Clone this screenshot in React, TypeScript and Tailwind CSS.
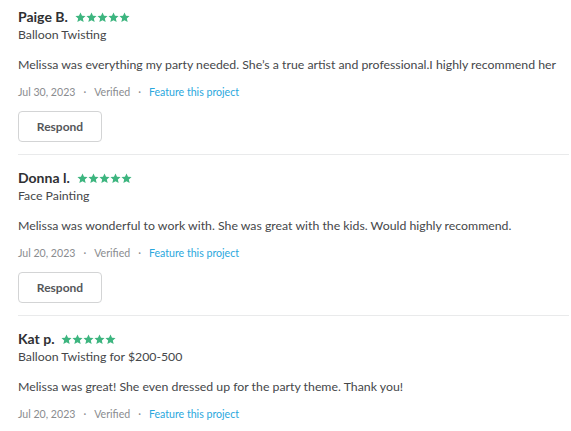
const reviews = [
  {
    name: "Paige B.",
    service: "Balloon Twisting",
    text: "Melissa was everything my party needed. She’s a true artist and professional.I highly recommend her",
    date: "Jul 30, 2023",
    respond: true,
  },
  {
    name: "Donna l.",
    service: "Face Painting",
    text: "Melissa was wonderful to work with. She was great with the kids. Would highly recommend.",
    date: "Jul 20, 2023",
    respond: true,
  },
  {
    name: "Kat p.",
    service: "Balloon Twisting for $200-500",
    text: "Melissa was great! She even dressed up for the party theme. Thank you!",
    date: "Jul 20, 2023",
    respond: false,
  },
];

function Stars() {
  return (
    <div className="flex items-center">
      {[0, 1, 2, 3, 4].map((i) => (
        <svg key={i} viewBox="0 0 24 24" className="h-[11px] w-[11px] fill-[#3db57f]">
          <path d="M12 1l3.3 7.2 7.7.7-5.9 5.2 1.8 7.7L12 17.8l-6.9 4 1.8-7.7L1 8.9l7.7-.7z" />
        </svg>
      ))}
    </div>
  );
}

export default function App() {
  return (
    <div
      className="min-h-screen bg-white pl-[18px] pr-[2px] text-[#2f3033]"
      style={{ fontFamily: "Lato, 'Noto Sans', sans-serif" }}
    >
      {reviews.map((r, idx) => (
        <div
          key={idx}
          className={[
            idx === 0 ? "pt-[8px]" : "pt-[14px]",
            idx < reviews.length - 1 ? "border-b border-[#e9eaeb] pb-[12px]" : "pb-[12px]",
          ].join(" ")}
        >
          <div className="flex items-center gap-[7px]">
            <span className="text-[14px] font-bold leading-[18px]">{r.name}</span>
            <Stars />
          </div>
          <div className="text-[12.3px] leading-[17px] text-[#45474a]">{r.service}</div>
          <p className="mt-[13px] text-[12.3px] leading-[18px] text-[#45474a]">{r.text}</p>
          <div className="mt-[11px] flex items-center gap-[8px] text-[10.6px] leading-[14px] text-[#8a8c8f]">
            <span>{r.date}</span>
            <span>·</span>
            <span>Verified</span>
            <span>·</span>
            <span className="text-[#2aa7dd]">Feature this project</span>
          </div>
          {r.respond && (
            <button className="mt-[12px] h-[31px] w-[84px] rounded-[4px] border border-[#d3d4d5] bg-white text-[12px] font-bold text-[#55575a]">
              Respond
            </button>
          )}
        </div>
      ))}
    </div>
  );
}
